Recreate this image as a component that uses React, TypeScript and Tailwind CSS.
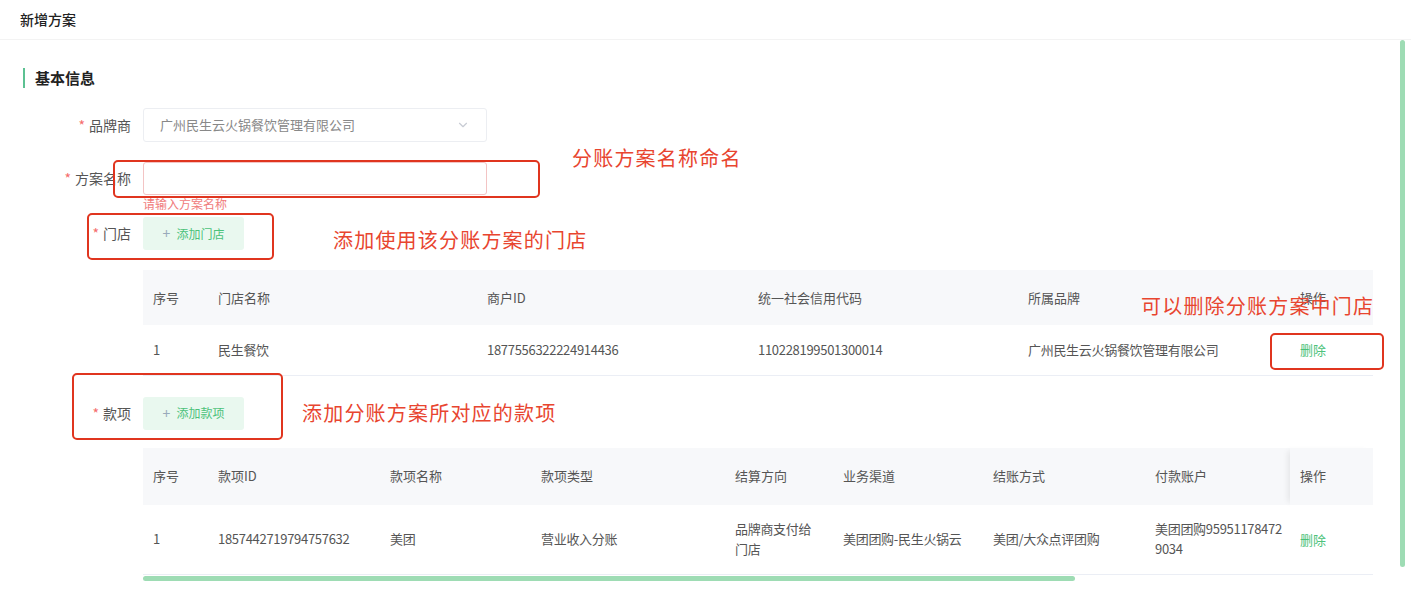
import { ChevronDown } from "lucide-react";

type Col = { title: string; width: number };

const storeCols: Col[] = [
  { title: "序号", width: 65 },
  { title: "门店名称", width: 269 },
  { title: "商户ID", width: 271 },
  { title: "统一社会信用代码", width: 270 },
  { title: "所属品牌", width: 272 },
  { title: "操作", width: 83 },
];

const storeRow = [
  "1",
  "民生餐饮",
  "1877556322224914436",
  "110228199501300014",
  "广州民生云火锅餐饮管理有限公司",
];

const itemCols: Col[] = [
  { title: "序号", width: 65 },
  { title: "款项ID", width: 172 },
  { title: "款项名称", width: 151 },
  { title: "款项类型", width: 194 },
  { title: "结算方向", width: 108 },
  { title: "业务渠道", width: 150 },
  { title: "结账方式", width: 162 },
  { title: "付款账户", width: 145 },
  { title: "操作", width: 83 },
];

// long cells wrap the way the table does in the screenshot
const itemRow = [
  "1",
  "1857442719794757632",
  "美团",
  "营业收入分账",
  "品牌商支付给\n门店",
  "美团团购-民生火锅云",
  "美团/大众点评团购",
  "美团团购95951178472\n9034",
];

function Label({ text }: { text: string }) {
  return (
    <div className="w-[131px] shrink-0 text-right text-[14px] text-[#555]">
      <span className="mr-[4px] text-[#f56c6c]">*</span>
      {text}
    </div>
  );
}

function AddButton({ text }: { text: string }) {
  return (
    <button className="ml-[12px] flex h-[33px] w-[101px] items-center justify-center gap-[6px] rounded-[3px] bg-[#e9f8ef] text-[12px] text-[#4cc27a]">
      <span className="text-[14px] text-[#9ab]">+</span>
      {text}
    </button>
  );
}

function DataTable({
  cols,
  row,
  headH,
  rowH,
  fixedOp,
}: {
  cols: Col[];
  row: string[];
  headH: string;
  rowH: string;
  fixedOp?: boolean;
}) {
  const opShadow = fixedOp ? "shadow-[-5px_0_6px_-3px_rgba(0,0,0,0.08)]" : "";
  return (
    <table className="ml-[143px] w-[1230px] table-fixed border-collapse text-[13px] text-[#555]">
      <colgroup>
        {cols.map((c) => (
          <col key={c.title} style={{ width: c.width }} />
        ))}
      </colgroup>
      <thead>
        <tr className={`${headH} bg-[#f7f8fa]`}>
          {cols.map((c, i) => (
            <th
              key={c.title}
              className={`px-[10px] text-left font-normal text-[#555] ${
                i === cols.length - 1 ? opShadow : ""
              }`}
            >
              {c.title}
            </th>
          ))}
        </tr>
      </thead>
      <tbody>
        <tr className={`${rowH} border-b border-[#ebeef5]`}>
          {row.map((v, i) => (
            <td
              key={i}
              className="whitespace-pre px-[10px] leading-[20px] tracking-[-0.3px]"
            >
              {v}
            </td>
          ))}
          <td className={`relative bg-white px-[10px] text-[#4cc27a] ${opShadow}`}>删除</td>
        </tr>
      </tbody>
    </table>
  );
}

function Note({ text, className }: { text: string; className: string }) {
  return (
    <div
      className={`absolute whitespace-nowrap text-[20px] leading-[24px] tracking-[1.2px] text-[#e8452f] ${className}`}
    >
      {text}
    </div>
  );
}

function Box({ className }: { className: string }) {
  return (
    <div
      className={`absolute rounded-[5px] border-[2.5px] border-[#e0351f] ${className}`}
    />
  );
}

export default function App() {
  return (
    <div className="relative h-[591px] w-[1411px] overflow-hidden bg-white font-['Noto_Sans_CJK_SC','Noto_Sans',sans-serif]">
      <header className="flex h-[40px] items-center border-b border-[#f3f3f3] px-[20px] text-[14px] font-medium text-[#222]">
        新增方案
      </header>

      <div className="flex">
        <main className="flex-1">
          <div className="ml-[23px] mt-[28px] flex h-[20px] items-center border-l-[2px] border-[#5cc192] pl-[10px] text-[15px] font-bold text-[#222]">
            基本信息
          </div>

          <div className="mt-[20px] flex items-center">
            <Label text="品牌商" />
            <div className="ml-[12px] flex h-[34px] w-[344px] items-center justify-between rounded-[3px] border border-[#eceef2] px-[16px] text-[13px] text-[#888]">
              广州民生云火锅餐饮管理有限公司
              <ChevronDown size={14} className="text-[#c8ccd4]" />
            </div>
          </div>

          <div className="mt-[20px] flex items-center">
            <Label text="方案名称" />
            <div className="ml-[12px] h-[33px] w-[344px] rounded-[3px] border border-[#f3c4c4]" />
          </div>
          <div className="ml-[143px] h-[22px] text-[12px] leading-[18px] text-[#f07c7c]">
            请输入方案名称
          </div>

          <div className="flex items-center">
            <Label text="门店" />
            <AddButton text="添加门店" />
          </div>

          <div className="mt-[20px]">
            <DataTable
              cols={storeCols}
              row={storeRow}
              headH="h-[55px]"
              rowH="h-[50px]"
            />
          </div>

          <div className="mt-[21px] flex items-center">
            <Label text="款项" />
            <AddButton text="添加款项" />
          </div>

          <div className="mt-[18px]">
            <DataTable
              cols={itemCols}
              row={itemRow}
              headH="h-[57px]"
              rowH="h-[70px]"
              fixedOp
            />
            <div className="ml-[143px] mt-[1px] h-[5px] w-[932px] rounded-full bg-[#9edcb4]" />
          </div>
        </main>

        <div className="w-[11px] shrink-0">
          <div className="h-[527px] w-[5px] rounded-full bg-[#9edcb4]" />
        </div>
      </div>

      <Box className="left-[113px] top-[160px] h-[38px] w-[427px]" />
      <Note text="分账方案名称命名" className="left-[572px] top-[146px]" />
      <Box className="left-[87px] top-[213px] h-[47px] w-[187px]" />
      <Note text="添加使用该分账方案的门店" className="left-[333px] top-[228px]" />
      <Note text="可以删除分账方案中门店" className="left-[1141px] top-[294px]" />
      <Box className="left-[1270px] top-[333px] h-[37px] w-[114px]" />
      <Box className="left-[72px] top-[373px] h-[67px] w-[211px]" />
      <Note text="添加分账方案所对应的款项" className="left-[302px] top-[401px]" />
    </div>
  );
}
